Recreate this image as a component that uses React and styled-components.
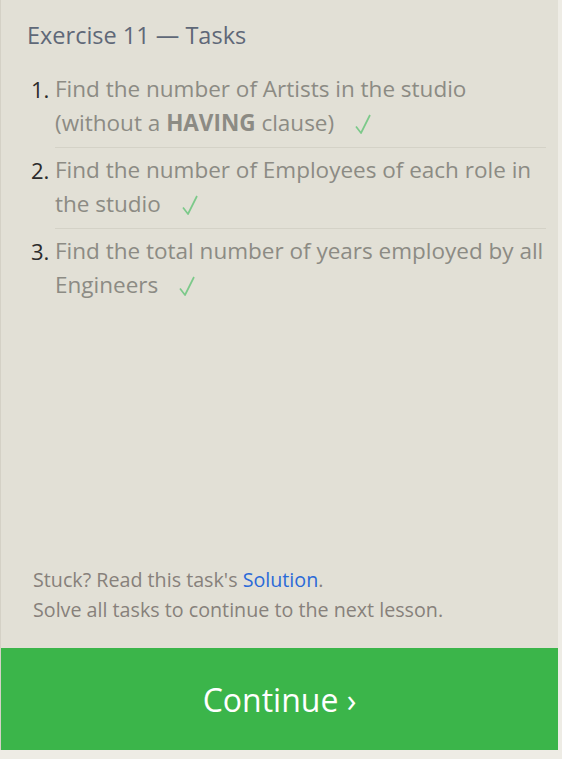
import styled, { createGlobalStyle } from "styled-components";

const GlobalStyle = createGlobalStyle`
  html, body {
    margin: 0;
    padding: 0;
    background: #eeece5;
  }
`;

const tasks = [
  {
    id: 1,
    text: (
      <>
        Find the number of Artists in the studio (without a <b>HAVING</b> clause)
      </>
    ),
  },
  { id: 2, text: "Find the number of Employees of each role in the studio" },
  { id: 3, text: "Find the total number of years employed by all Engineers" },
];

function CheckMark() {
  return (
    <Check width="16" height="20" viewBox="0 0 16 20" aria-label="done">
      <path
        d="M1 12.5 L6 19 L15 1"
        fill="none"
        stroke="#7cc98a"
        strokeWidth="1.7"
        strokeLinejoin="round"
      />
    </Check>
  );
}

export default function App() {
  return (
    <>
      <GlobalStyle />
      <Panel>
        <Body>
          <Title>Exercise 11 — Tasks</Title>
          <TaskList>
            {tasks.map((task, index) => (
              <Task key={task.id} last={index === tasks.length - 1}>
                <Num>{task.id}.</Num>
                <TaskText>
                  {task.text}
                  <CheckMark />
                </TaskText>
              </Task>
            ))}
          </TaskList>
        </Body>
        <Footer>
          <p>
            Stuck? Read this task's <a href="#">Solution</a>.
          </p>
          <p>Solve all tasks to continue to the next lesson.</p>
        </Footer>
        <ContinueButton>Continue ›</ContinueButton>
      </Panel>
    </>
  );
}

const Panel = styled.div`
  width: 557px;
  height: 750px;
  background: #e2e0d6;
  border-left: 1px solid #d4d1c6;
  display: flex;
  flex-direction: column;
  font-family: "Open Sans", "Noto Sans", sans-serif;
`;
const Body = styled.div`
  flex: 1;
  padding: 20px 12px 0 26px;
`;
const Title = styled.h2`
  margin: 0 0 17px;
  font-size: 23.5px;
  font-weight: 400;
  line-height: 30px;
  color: #5f6878;
`;
const TaskList = styled.ol`
  list-style: none;
  margin: 0;
  padding: 0;
`;
const Task = styled.li`
  display: flex;
  padding: 5px 0 7px;
  border-bottom: ${(props) => (props.last ? "none" : "1px solid #d4d2c7")};
  margin-left: 28px;
  position: relative;
`;
const Num = styled.span`
  position: absolute;
  left: -24px;
  font-size: 22px;
  line-height: 34px;
  color: #2b2b2b;
`;
const TaskText = styled.span`
  font-size: 22.5px;
  line-height: 34px;
  color: #8c8b84;
  b {
    font-weight: 700;
  }
`;
const Check = styled.svg`
  margin-left: 21px;
  vertical-align: -3px;
`;
const Footer = styled.div`
  padding: 0 20px 23px 32px;
  font-size: 19.7px;
  line-height: 30px;
  color: #87817b;
  p {
    margin: 0;
  }
  a {
    color: #2b6ad8;
    text-decoration: none;
  }
`;
const ContinueButton = styled.button`
  height: 102px;
  border: none;
  background: #3bb54a;
  color: #ffffff;
  font-family: "Open Sans", "Noto Sans", sans-serif;
  font-size: 32px;
  cursor: pointer;
`;
